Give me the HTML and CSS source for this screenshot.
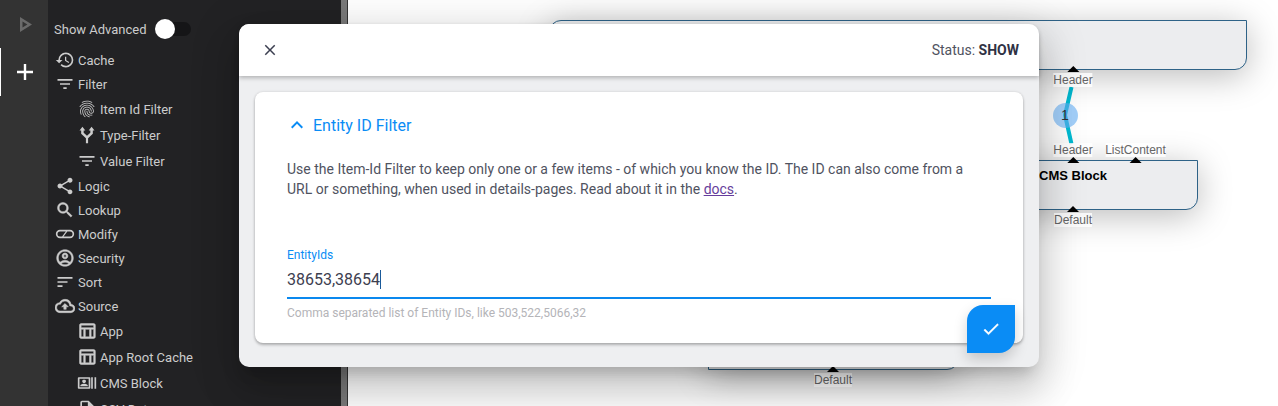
FILE: index.html
```html
<!DOCTYPE html>
<html lang="en">
<head>
<meta charset="utf-8">
<title>Entity ID Filter</title>
<link rel="stylesheet" href="styles.css">
</head>
<body>
<div class="app">
  <nav class="rail">
    <div class="rail-btn">
      <svg class="rail-play" viewBox="0 0 12 15"><path d="M0 0v15l12-7.500zM2.500 4.400 7.400 7.500 2.500 10.600z" fill-rule="evenodd"/></svg>
    </div>
    <div class="rail-btn rail-btn-active">
      <svg class="rail-plus" viewBox="0 0 16 16"><path d="M6.800 0h2.400v6.800H16v2.400H9.200V16H6.800V9.200H0V6.800h6.800z"/></svg>
    </div>
  </nav>
  <aside class="sidebar">
    <div class="advanced">
      <span>Show Advanced</span>
      <span class="switch"><span class="switch-thumb"></span></span>
    </div>
    <ul class="tree">
      <li class="row"><svg class="ico" viewBox="0 0 24 24"><path d="M13 3a9 9 0 0 0-9 9H1l3.890 3.890.07.14L9 12H6c0-3.870 3.130-7 7-7s7 3.130 7 7-3.130 7-7 7c-1.930 0-3.680-.79-4.940-2.060l-1.420 1.420A8.954 8.954 0 0 0 13 21a9 9 0 0 0 0-18zm-1 5v5l4.280 2.540.72-1.210-3.500-2.080V8H12z"/></svg>Cache</li>
      <li class="row"><svg class="ico" viewBox="0 0 24 24"><path d="M10 18h4v-2h-4v2zM3 6v2h18V6H3zm3 7h12v-2H6v2z"/></svg>Filter</li>
      <li class="row sub"><svg class="ico" viewBox="0 0 24 24"><path d="M17.810 4.470c-.08 0-.16-.02-.23-.06C15.660 3.420 14 3 12.010 3c-1.980 0-3.860.47-5.570 1.410-.24.13-.54.04-.68-.2-.13-.24-.04-.55.2-.68C7.820 2.520 9.860 2 12.010 2c2.130 0 3.990.47 6.030 1.520.25.13.34.43.21.67-.09.18-.26.28-.44.28zM3.500 9.720c-.1 0-.2-.03-.29-.09-.23-.16-.28-.47-.12-.7.99-1.400 2.250-2.500 3.750-3.270C9.980 4.040 14 4.030 17.150 5.650c1.500.77 2.760 1.860 3.750 3.250.16.22.11.54-.12.7-.23.16-.54.11-.7-.12-.9-1.260-2.040-2.250-3.390-2.940-2.870-1.470-6.540-1.470-9.400.01-1.360.7-2.500 1.700-3.400 2.960-.08.14-.23.21-.39.21zm6.250 12.070c-.13 0-.26-.05-.35-.15-.87-.87-1.340-1.430-2.010-2.640-.69-1.230-1.050-2.730-1.050-4.340 0-2.970 2.540-5.390 5.660-5.390s5.660 2.420 5.660 5.390c0 .28-.22.5-.5.5s-.5-.22-.5-.5c0-2.420-2.090-4.390-4.660-4.390s-4.660 1.970-4.660 4.390c0 1.440.32 2.770.93 3.850.64 1.150 1.080 1.640 1.850 2.420.19.2.19.51 0 .71-.11.1-.24.15-.37.15zm7.170-1.850c-1.190 0-2.240-.3-3.100-.89-1.490-1.010-2.380-2.650-2.380-4.390 0-.28.22-.5.5-.5s.5.22.5.5c0 1.410.72 2.740 1.940 3.560.71.48 1.540.71 2.540.71.24 0 .64-.03 1.040-.1.27-.05.53.13.58.41.05.27-.13.53-.41.58-.57.11-1.070.12-1.210.12zM14.910 22c-.04 0-.09-.01-.13-.02-1.590-.44-2.630-1.030-3.720-2.100-1.400-1.390-2.170-3.240-2.170-5.220 0-1.620 1.380-2.940 3.080-2.940 1.700 0 3.080 1.320 3.080 2.940 0 1.070.93 1.940 2.080 1.940s2.080-.87 2.080-1.940c0-3.770-3.250-6.830-7.250-6.830-2.840 0-5.440 1.580-6.610 4.030-.39.81-.59 1.760-.59 2.800 0 .78.07 2.010.67 3.610.1.26-.03.55-.29.64-.26.1-.55-.04-.64-.29-.49-1.310-.73-2.610-.73-3.960 0-1.200.23-2.290.68-3.240 1.330-2.790 4.280-4.600 7.510-4.600 4.550 0 8.250 3.510 8.250 7.830 0 1.620-1.380 2.940-3.080 2.940s-3.080-1.320-3.080-2.940c0-1.070-.93-1.940-2.080-1.940s-2.080.87-2.080 1.940c0 1.710.66 3.310 1.870 4.510.95.94 1.860 1.460 3.270 1.850.27.07.42.35.35.61-.05.23-.26.38-.47.38z"/></svg>Item Id Filter</li>
      <li class="row sub"><svg class="ico" viewBox="0 0 24 24"><path d="M6.500 2 10 6.500H8v2.700L12 13l4-3.800V6.500h-2L17.500 2 21 6.500h-2v3.900l-5.700 5.400V22h-2.600v-6.200L5 10.400V6.500H3z"/></svg>Type-Filter</li>
      <li class="row sub"><svg class="ico" viewBox="0 0 24 24"><path d="M10 18h4v-2h-4v2zM3 6v2h18V6H3zm3 7h12v-2H6v2z"/></svg>Value Filter</li>
      <li class="row"><svg class="ico" viewBox="0 0 24 24"><path d="M18 16.080c-.76 0-1.440.3-1.960.77L8.910 12.700c.05-.23.09-.46.09-.7s-.04-.47-.09-.7l7.050-4.110c.54.5 1.250.81 2.040.81 1.660 0 3-1.340 3-3s-1.340-3-3-3-3 1.340-3 3c0 .24.04.47.09.7L8.040 9.810C7.500 9.310 6.790 9 6 9c-1.660 0-3 1.340-3 3s1.340 3 3 3c.79 0 1.500-.31 2.040-.81l7.120 4.160c-.05.21-.08.43-.08.65 0 1.610 1.310 2.920 2.920 2.920 1.610 0 2.920-1.310 2.920-2.920s-1.310-2.920-2.920-2.920z"/></svg>Logic</li>
      <li class="row"><svg class="ico ico-bold" viewBox="0 0 24 24"><path d="M15.500 14h-.79l-.28-.27A6.471 6.471 0 0 0 16 9.500 6.500 6.500 0 1 0 9.500 16c1.610 0 3.090-.59 4.230-1.570l.27.28v.79l5 4.990L20.490 19l-4.990-5zm-6 0C7.010 14 5 11.990 5 9.500S7.010 5 9.500 5 14 7.010 14 9.500 11.990 14 9.500 14z"/></svg>Lookup</li>
      <li class="row"><svg class="ico" viewBox="0 0 24 24"><path fill-rule="evenodd" d="M7 7h11a5 5 0 0 1 0 10H6A5 5 0 0 1 6 7zm-1 2a3 3 0 0 0 0 6h2.500l4.500-6zm8.800 0L10.300 15H18a3 3 0 0 0 0-6z"/></svg>Modify</li>
      <li class="row"><svg class="ico ico-bold" viewBox="0 0 24 24"><path d="M12 2C6.480 2 2 6.480 2 12s4.480 10 10 10 10-4.480 10-10S17.520 2 12 2zM7.350 18.500C8.660 17.560 10.260 17 12 17s3.340.56 4.650 1.500c-1.310.94-2.910 1.500-4.650 1.500s-3.340-.56-4.650-1.500zm10.790-1.380a9.947 9.947 0 0 0-12.280 0A7.957 7.957 0 0 1 4 12c0-4.420 3.580-8 8-8s8 3.580 8 8c0 1.950-.7 3.730-1.860 5.120zM12 6c-1.930 0-3.500 1.570-3.500 3.500S10.070 13 12 13s3.500-1.570 3.500-3.500S13.930 6 12 6zm0 5c-.83 0-1.500-.67-1.500-1.500S11.170 8 12 8s1.500.67 1.500 1.500S12.830 11 12 11z"/></svg>Security</li>
      <li class="row"><svg class="ico" viewBox="0 0 24 24"><path d="M3 18h6v-2H3v2zM3 6v2h18V6H3zm0 7h12v-2H3v2z"/></svg>Sort</li>
      <li class="row"><svg class="ico ico-bold" viewBox="0 0 24 24"><path d="M19.350 10.040A7.490 7.490 0 0 0 12 4C9.110 4 6.600 5.640 5.350 8.040A5.994 5.994 0 0 0 0 14c0 3.310 2.690 6 6 6h13c2.760 0 5-2.240 5-5 0-2.640-2.050-4.780-4.650-4.960zM19 18H6c-2.210 0-4-1.790-4-4 0-2.050 1.530-3.760 3.560-3.970l1.070-.11.5-.95A5.469 5.469 0 0 1 12 6c2.620 0 4.880 1.860 5.390 4.430l.3 1.500 1.530.11A2.980 2.980 0 0 1 22 15c0 1.650-1.350 3-3 3zM8 13h2.550v3h2.900v-3H16l-4-4z"/></svg>Source</li>
      <li class="row sub"><svg class="ico ico-bold" viewBox="0 0 24 24"><path d="M20 3H5c-1.100 0-2 .9-2 2v14c0 1.100.9 2 2 2h15c1.100 0 2-.9 2-2V5c0-1.100-.9-2-2-2zm0 2v3H5V5h15zm-5 14h-5v-9h5v9zM5 10h3v9H5v-9zm12 9v-9h3v9h-3z"/></svg>App</li>
      <li class="row sub"><svg class="ico ico-bold" viewBox="0 0 24 24"><path d="M20 3H5c-1.100 0-2 .9-2 2v14c0 1.100.9 2 2 2h15c1.100 0 2-.9 2-2V5c0-1.100-.9-2-2-2zm0 2v3H5V5h15zm-5 14h-5v-9h5v9zM5 10h3v9H5v-9zm12 9v-9h3v9h-3z"/></svg>App Root Cache</li>
      <li class="row sub"><svg class="ico" viewBox="0 0 24 24"><path d="M21 5v14h2V5h-2zm-4 14h2V5h-2v14zM15 5H2c-.55 0-1 .45-1 1v12c0 .55.45 1 1 1h13c.55 0 1-.45 1-1V6c0-.55-.45-1-1-1zm-1 12H3V7h11v10zM8.500 12c1.240 0 2.250-1.010 2.250-2.250S9.740 8 8.500 8 6.250 8.510 6.250 9.750 7.260 12 8.500 12zm4.500 4v-1c0-1.200-3-2-4.500-2S4 13.800 4 15v1z"/></svg>CMS Block</li>
      <li class="row sub"><svg class="ico" viewBox="0 0 24 24"><path d="M14 2H6c-1.100 0-2 .9-2 2v16c0 1.100.9 2 2 2h12c1.100 0 2-.9 2-2V8l-6-6zm4 18H6V4h7v5h5v11z"/></svg>CSV Data</li>
    </ul>
  </aside>
  <div class="scrollbar"></div>
  <main class="canvas">
    <svg class="wire" viewBox="0 0 40 70"><path d="M30.500 2 24 30 30.500 59"/></svg>
    <div class="badge">1</div>
    <div class="node node-top"></div>
    <div class="node node-mid"><span class="node-title">CMS Block</span></div>
    <div class="node node-low"></div>
    <div class="port port-a"><i class="tri"></i><span class="port-label">Header</span></div>
    <div class="port port-b"><span class="port-label">Header</span><i class="tri"></i></div>
    <div class="port port-c"><span class="port-label">ListContent</span><i class="tri"></i></div>
    <div class="port port-d"><i class="tri"></i><span class="port-label">Default</span></div>
    <div class="port port-e"><i class="tri"></i><span class="port-label">Default</span></div>
  </main>
  <section class="modal">
    <header class="modal-head">
      <svg class="close" viewBox="0 0 24 24"><path d="M19 6.410 17.590 5 12 10.590 6.410 5 5 6.410 10.590 12 5 17.590 6.410 19 12 13.410 17.590 19 19 17.590 13.410 12z"/></svg>
      <div class="status">Status: <b>SHOW</b></div>
    </header>
    <div class="modal-body">
      <div class="card">
        <div class="card-title">
          <svg class="chevron" viewBox="0 0 24 24"><path d="M12 8l-6 6 1.410 1.410L12 10.830l4.590 4.580L18 14z"/></svg>
          <span>Entity ID Filter</span>
        </div>
        <p class="intro">Use the Item-Id Filter to keep only one or a few items - of which you know the ID. The ID can also come from a<br>URL or something, when used in details-pages. Read about it in the <a class="docs" href="#">docs</a>.</p>
        <div class="field">
          <div class="field-label">EntityIds</div>
          <div class="field-input"><span class="field-value">38653,38654</span></div>
          <div class="field-hint">Comma separated list of Entity IDs, like 503,522,5066,32</div>
        </div>
      </div>
    </div>
    <button class="fab" type="button" aria-label="Save">
      <svg viewBox="0 0 24 24"><path d="M9 16.170 4.830 12l-1.420 1.410L9 19 21 7l-1.410-1.410z"/></svg>
    </button>
  </section>
</div>
</body>
</html>
```
FILE: styles.css
```css
* { box-sizing: border-box; }
html, body { margin: 0; padding: 0; height: 100%; overflow: hidden; }
body { font-family: Roboto, "Liberation Sans", sans-serif; background: #fff; }

.app { position: relative; display: flex; width: 1278px; height: 406px; overflow: hidden; }

/* Left rail */
.rail { flex: 0 0 48px; background: #333; }
.rail-btn { height: 48px; display: flex; align-items: center; justify-content: center; }
.rail-btn-active { border-left: 1px solid #fff; }
.rail-play { width: 12px; height: 15px; margin-left: 3px; fill: #6a6a6a; }
.rail-plus { width: 16px; height: 16px; fill: #fff; }

/* Sidebar */
.sidebar { flex: 0 0 292px; background: #222224; color: #ccc; font-size: 13px; overflow: hidden; }
.advanced { display: flex; align-items: center; height: 20px; margin-top: 19px; padding-left: 6px; gap: 9px; }
.switch { position: relative; width: 35px; height: 14px; border-radius: 7px; background: #151517; }
.switch-thumb { position: absolute; left: -1px; top: -3px; width: 20px; height: 20px; border-radius: 50%; background: #fff; }
.tree { list-style: none; margin: 9px 0 0; padding: 0 0 0 7px; }
.row { display: flex; align-items: center; height: 24px; white-space: nowrap; }
.row.sub { height: 26px; padding-left: 22px; }
.row .ico { width: 20px; height: 20px; margin-right: 3px; fill: #ccc; flex: none; }
.row .ico-bold { stroke: #ccc; stroke-width: .6; }

.scrollbar { flex: 0 0 8px; background: linear-gradient(90deg, #222 0, #222 1px, #7a7a7a 1px, #7a7a7a 7px, #333 7px); }

/* Canvas */
.canvas { position: relative; flex: 1; background: #fff; }
.node { position: absolute; background: #ecedef; border: 1px solid #2e6287; box-shadow: 0 6px 34px rgba(0,0,0,.27); border-radius: 12px 0 12px 0; }
.node-top { left: 201px; top: 20px; width: 698px; height: 50px; }
.node-mid { left: 600px; top: 160px; width: 250px; height: 50px; text-align: center; }
.node-low { left: 360px; top: 320px; width: 251px; height: 50px; }
.node-title { display: block; padding-top: 7px; font: bold 13px "Liberation Sans", sans-serif; color: #000; }
.wire { position: absolute; left: 693px; top: 85px; width: 40px; height: 70px; fill: none; stroke: #00bcd4; stroke-width: 4; }
.badge { position: absolute; left: 704.5px; top: 102.5px; width: 25px; height: 25px; border-radius: 50%; background: rgba(100,175,245,.6); color: #333; font: 14px/25px "Liberation Sans", sans-serif; text-align: center; z-index: 1; }

.port { position: absolute; display: flex; flex-direction: column; align-items: center; transform: translateX(-50%); z-index: 1; }
.tri { display: block; width: 0; height: 0; border-left: 6px solid transparent; border-right: 6px solid transparent; border-bottom: 6px solid #000; }
.port-label { font: 12px/14px "Liberation Sans", sans-serif; color: #666; background: rgba(255,255,255,.8); }
.port-a { left: 725px; top: 66px; }
.port-a .port-label { margin-top: 1px; }
.port-b { left: 725px; top: 143px; }
.port-c { left: 787.5px; top: 143px; }
.port-d { left: 725px; top: 206px; }
.port-d .port-label { margin-top: 1px; }
.port-e { left: 485px; top: 366px; }
.port-e .port-label { margin-top: 1px; }

/* Modal */
.modal { position: absolute; left: 239px; top: 24px; width: 800px; height: 343px; display: flex; flex-direction: column; background: #eeeff1; border-radius: 10px; z-index: 5; box-shadow: 0 11px 15px -7px rgba(0,0,0,.2), 0 24px 38px 3px rgba(0,0,0,.14), 0 9px 46px 8px rgba(0,0,0,.12); }
.modal-head { flex: 0 0 52px; display: flex; align-items: center; justify-content: space-between; padding: 0 20px 0 22px; background: #fff; border-radius: 10px 10px 0 0; box-shadow: 0 2px 4px rgba(0,0,0,.25); color: #50535f; font-size: 14px; position: relative; }
.close { width: 18px; height: 18px; fill: #3c3f50; }
.status b { color: #2f3244; }
.modal-body { flex: 1; padding: 16px 16px 24px; }
.card { height: 251px; background: #fff; border-radius: 8px; padding: 0 32px; box-shadow: 0 2px 3px rgba(0,0,0,.25), 0 0 3px rgba(0,0,0,.12); }
.card-title { display: flex; align-items: center; height: 66px; color: #0a8cf5; font-size: 16px; gap: 4px; }
.chevron { width: 24px; height: 24px; margin-left: -2px; fill: #0a8cf5; }
.intro { margin: 1px 0 0; font-size: 14px; line-height: 20px; color: #50535f; white-space: nowrap; }
.docs { color: #663d9c; }
.field { margin-top: 49px; }
.field-label { font-size: 12px; line-height: 14px; color: #0a8cf5; }
.field-input { margin-top: 6px; height: 31px; border-bottom: 2px solid #0a88ee; font-size: 16px; line-height: 24px; color: #3d4050; }
.field-value { display: inline-block; height: 19px; line-height: 19px; border-right: 1px solid #1a5a9a; }
.field-hint { margin-top: 7px; font-size: 12px; line-height: 14px; color: #b4b4b8; }
.fab { position: absolute; right: 24px; top: 281px; width: 48px; height: 48px; padding: 14px; border: 0; background: #0a8cf5; border-radius: 16px 0 16px 0; box-shadow: 0 6px 14px rgba(0,0,0,.18); }
.fab svg { display: block; width: 20px; height: 20px; fill: #fff; stroke: #fff; stroke-width: .5; }
```
